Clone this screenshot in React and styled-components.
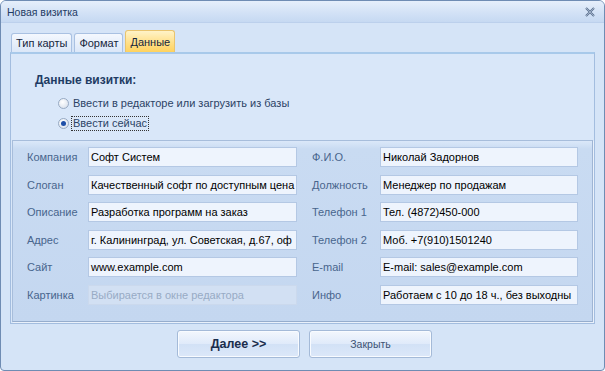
import React from "react";
import styled, { createGlobalStyle } from "styled-components";

const Global = createGlobalStyle`
  html, body { margin: 0; padding: 0; background: #ffffff; }
  body { font-family: "Liberation Sans", Arial, sans-serif; }
`;

const Window = styled.div`
  box-sizing: border-box;
  width: 605px;
  height: 371px;
  border: 1px solid #6f8cb3;
  border-radius: 6px 6px 4px 4px;
  background: #d5e4f7;
  overflow: hidden;
  display: flex;
  flex-direction: column;
  font-family: "Liberation Sans", Arial, sans-serif;
  font-size: 11px;
`;

const TitleBar = styled.div`
  height: 21px;
  flex: none;
  display: flex;
  align-items: center;
  justify-content: space-between;
  padding: 0 8px 0 6px;
  background: linear-gradient(#e6effb, #d3e2f6 55%, #c6d9f2);
  border-bottom: 1px solid #bcd0ec;
  color: #1f3c64;
  font-size: 10.5px;
`;

const CloseBtn = styled.span`
  display: flex;
  width: 12px;
  height: 12px;
`;

const Body = styled.div`
  flex: 1;
  display: flex;
  flex-direction: column;
  padding: 7px 9px 0 9px;
`;

const Tabs = styled.div`
  display: flex;
  align-items: flex-end;
  gap: 2px;
  height: 22px;
  padding-left: 1px;
`;

const Tab = styled.div`
  box-sizing: border-box;
  height: ${(p) => (p.$active ? "22px" : "19px")};
  padding: 0 4px;
  display: flex;
  align-items: center;
  border: 1px solid ${(p) => (p.$active ? "#e9c46e" : "#a9c1e2")};
  border-bottom: none;
  border-radius: 3px 3px 0 0;
  background: ${(p) =>
    p.$active
      ? "linear-gradient(#fff3c8, #ffe08a 55%, #ffd25e)"
      : "linear-gradient(#f4f8fe, #dbe7f8)"};
  color: #16263d;
  font-size: 11px;
`;

const Panel = styled.div`
  box-sizing: border-box;
  height: 272px;
  border: 1px solid #a3bddf;
  border-top: 2px solid #a8c9ea;
  background: #d9e7f9;
  display: flex;
  flex-direction: column;
  padding: 0 1px 1px 1px;
`;

const Intro = styled.div`
  height: 86px;
  flex: none;
  padding: 19px 0 0 23px;
  box-sizing: border-box;
`;

const Heading = styled.div`
  font-weight: bold;
  color: #1f3c64;
  font-size: 12px;
  line-height: 14px;
  margin-bottom: 6px;
`;

const RadioRow = styled.label`
  display: flex;
  align-items: center;
  gap: 3px;
  height: 20px;
  margin-left: 23px;
  color: #2c4365;
`;

const RadioDot = styled.span`
  box-sizing: border-box;
  width: 11px;
  height: 11px;
  border-radius: 50%;
  border: 1px solid #98aac3;
  background: radial-gradient(circle at 40% 35%, #ffffff, #d2dbe8);
  display: flex;
  align-items: center;
  justify-content: center;
  &::after {
    content: "";
    width: 5px;
    height: 5px;
    border-radius: 50%;
    background: ${(p) => (p.$checked ? "#1f4fa8" : "transparent")};
  }
`;

const RadioText = styled.span`
  padding: 0 1px;
  outline: ${(p) => (p.$focus ? "1px dotted #333" : "none")};
  line-height: 13px;
`;

const Group = styled.div`
  flex: 1;
  border: 1px solid #a7bddb;
  border-right-color: #9fb5d4;
  border-bottom-color: #96adcd;
  background: linear-gradient(#dbe8f9, #c9dbf2 8px, #c4d7f0);
  display: grid;
  grid-template-columns: 61px 209px 15px 68px 198px;
  grid-auto-rows: 20px;
  row-gap: 7.5px;
  padding: 6px 0 0 14px;
  align-content: start;
  box-shadow: 1px 1px 0 #eaf1fb;
`;

const Label = styled.div`
  display: flex;
  align-items: center;
  color: #48658d;
  font-size: 11px;
  grid-column: ${(p) => (p.$right ? 4 : 1)};
`;

const Field = styled.div`
  box-sizing: border-box;
  grid-column: ${(p) => (p.$right ? 5 : 2)};
  border: 1px solid ${(p) => (p.$disabled ? "#cbd9ed" : "#b4c8e4")};
  background: ${(p) => (p.$disabled ? "#d2e0f3" : "#eef4fd")};
  color: ${(p) => (p.$disabled ? "#98abc5" : "#000000")};
  padding: 0 2px;
  display: flex;
  align-items: center;
  overflow: hidden;
  white-space: nowrap;
  font-size: 11px;
`;

const Footer = styled.div`
  display: flex;
  justify-content: center;
  gap: 9px;
  padding-top: 6px;
  padding-left: 4px;
`;

const Button = styled.div`
  box-sizing: border-box;
  width: 123px;
  height: 28px;
  display: flex;
  align-items: center;
  justify-content: center;
  border: 1px solid #a4bad8;
  border-radius: 3px;
  background: linear-gradient(#f3f7fd, #dfeafa 50%, #d2e1f6 51%, #dce8f9);
  box-shadow: inset 0 0 0 1px #f8fbff;
  color: ${(p) => (p.$primary ? "#1a2d4c" : "#3d5273")};
  font-weight: ${(p) => (p.$primary ? "bold" : "normal")};
  font-size: ${(p) => (p.$primary ? "12.5px" : "10.5px")};
`;

const left = [
  ["Компания", "Софт Систем"],
  ["Слоган", "Качественный софт по доступным цена"],
  ["Описание", "Разработка программ на заказ"],
  ["Адрес", "г. Калининград, ул. Советская, д.67, оф"],
  ["Сайт", "www.example.com"],
  ["Картинка", "Выбирается в окне редактора", true],
];

const right = [
  ["Ф.И.О.", "Николай Задорнов"],
  ["Должность", "Менеджер по продажам"],
  ["Телефон 1", "Тел. (4872)450-000"],
  ["Телефон 2", "Моб. +7(910)1501240"],
  ["E-mail", "E-mail: sales@example.com"],
  ["Инфо", "Работаем с 10 до 18 ч., без выходны"],
];

export default function App() {
  return (
    <>
      <Global />
      <Window>
        <TitleBar>
          <span>Новая визитка</span>
          <CloseBtn>
            <svg width="12" height="12" viewBox="0 0 12 12">
              <path d="M2 2 L10 10 M10 2 L2 10" stroke="#5a6f8e" strokeWidth="2" />
              <path d="M2 2 L10 10 M10 2 L2 10" stroke="#c9d6e8" strokeWidth="0.6" />
            </svg>
          </CloseBtn>
        </TitleBar>
        <Body>
          <Tabs>
            <Tab>Тип карты</Tab>
            <Tab>Формат</Tab>
            <Tab $active>Данные</Tab>
          </Tabs>
          <Panel>
            <Intro>
              <Heading>Данные визитки:</Heading>
              <RadioRow>
                <RadioDot />
                <RadioText>Ввести в редакторе или загрузить из базы</RadioText>
              </RadioRow>
              <RadioRow>
                <RadioDot $checked />
                <RadioText $focus>Ввести сейчас</RadioText>
              </RadioRow>
            </Intro>
            <Group>
              {left.map((l, i) => (
                <React.Fragment key={i}>
                  <Label style={{ gridRow: i + 1 }}>{l[0]}</Label>
                  <Field style={{ gridRow: i + 1 }} $disabled={l[2]}>
                    {l[1]}
                  </Field>
                  <Label $right style={{ gridRow: i + 1 }}>
                    {right[i][0]}
                  </Label>
                  <Field $right style={{ gridRow: i + 1 }}>
                    {right[i][1]}
                  </Field>
                </React.Fragment>
              ))}
            </Group>
          </Panel>
          <Footer>
            <Button $primary>Далее &gt;&gt;</Button>
            <Button>Закрыть</Button>
          </Footer>
        </Body>
      </Window>
    </>
  );
}
